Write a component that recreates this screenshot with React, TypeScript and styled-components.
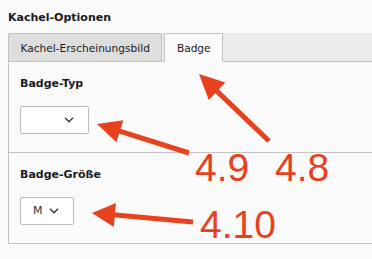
import React from "react";
import styled, { createGlobalStyle } from "styled-components";

const Global = createGlobalStyle`
  html, body { margin: 0; padding: 0; background: #fafafa; }
  body {
    font-family: "DejaVu Sans", Verdana, sans-serif;
    font-size: 11px;
    color: #1a1a1a;
    overflow: hidden;
  }
`;

const Page = styled.div`
  position: relative;
  width: 372px;
  height: 259px;
  padding: 10px 0 0 8px;
  box-sizing: border-box;
  overflow: hidden;
`;

const Title = styled.h2`
  margin: 0 0 7px;
  font-size: 11px;
  font-weight: bold;
  line-height: 16px;
`;

const TabBar = styled.div`
  display: flex;
  align-items: flex-start;
  gap: 2px;
  height: 28px;
  background: #ebebeb;
  border-bottom: 1px solid #c3c3c3;
`;

const Tab = styled.div<{ $active?: boolean }>`
  box-sizing: border-box;
  height: 29px;
  margin-bottom: -1px;
  padding: 0 11.5px;
  display: flex;
  align-items: center;
  font-size: 10.6px;
  line-height: 16px;
  border: 1px solid #c3c3c3;
  border-bottom-color: ${(p) => (p.$active ? "#fafafa" : "#c3c3c3")};
  background: ${(p) => (p.$active ? "#fafafa" : "#dedede")};
  color: #1a1a1a;
  border-radius: 2px 2px 0 0;
`;

const Panel = styled.div`
  border-left: 1px solid #c3c3c3;
  border-bottom: 1px solid #c3c3c3;
`;

const Section = styled.div<{ $last?: boolean }>`
  padding: 14px 12px 18px 11px;
  border-bottom: ${(p) => (p.$last ? "none" : "1px solid #c3c3c3")};
`;

const Label = styled.div`
  font-weight: bold;
  line-height: 16px;
  margin-bottom: 14px;
`;

const Select = styled.div<{ $width: number }>`
  box-sizing: border-box;
  width: ${(p) => p.$width}px;
  height: 28px;
  display: flex;
  align-items: center;
  justify-content: space-between;
  padding: 0 14px 0 12px;
  background: #ffffff;
  border: 1px solid #bbbbbb;
  border-radius: 2px;
  font-size: 11px;
  color: #333;
`;

const Value = styled.span`
  line-height: 16px;
`;

const Overlay = styled.svg`
  position: absolute;
  left: 0;
  top: 0;
  pointer-events: none;
`;

const Note = styled.span<{ $x: number; $y: number }>`
  position: absolute;
  left: ${(p) => p.$x}px;
  top: ${(p) => p.$y}px;
  font-family: "Liberation Sans", Arial, sans-serif;
  font-size: 39px;
  line-height: 39px;
  color: #e8411e;
  pointer-events: none;
`;

const Chevron = () => (
  <svg width="10" height="6" viewBox="0 0 10 6">
    <path d="M1 0.8 L5 4.8 L9 0.8" fill="none" stroke="#333" strokeWidth="1.3" />
  </svg>
);

const RED = "#e8411e";

function Arrow({ tip, tail, len, half }: { tip: [number, number]; tail: [number, number]; len: number; half: number }) {
  const dx = tail[0] - tip[0];
  const dy = tail[1] - tip[1];
  const d = Math.hypot(dx, dy);
  const ux = dx / d;
  const uy = dy / d;
  const bx = tip[0] + ux * len;
  const by = tip[1] + uy * len;
  const px = -uy * half;
  const py = ux * half;
  return (
    <g>
      <line x1={bx - ux * 2} y1={by - uy * 2} x2={tail[0]} y2={tail[1]} stroke={RED} strokeWidth={5} />
      <polygon points={`${tip[0]},${tip[1]} ${bx + px},${by + py} ${bx - px},${by - py}`} fill={RED} />
    </g>
  );
}

export default function App() {
  return (
    <>
      <Global />
      <Page>
        <Title>Kachel-Optionen</Title>
        <TabBar>
          <Tab>Kachel-Erscheinungsbild</Tab>
          <Tab $active>Badge</Tab>
        </TabBar>
        <Panel>
          <Section>
            <Label>Badge-Typ</Label>
            <Select $width={69}>
              <Value></Value>
              <Chevron />
            </Select>
          </Section>
          <Section $last>
            <Label>Badge-Größe</Label>
            <Select $width={54}>
              <Value>M</Value>
              <Chevron />
            </Select>
          </Section>
        </Panel>
        <Overlay width={372} height={259} viewBox="0 0 372 259">
          <Arrow tip={[199, 74]} tail={[269, 141]} len={25} half={12} />
          <Arrow tip={[97, 124]} tail={[189, 153]} len={24} half={11.5} />
          <Arrow tip={[92, 213]} tail={[193, 222]} len={23} half={12} />
        </Overlay>
        <Note $x={195} $y={148}>4.9</Note>
        <Note $x={275} $y={148}>4.8</Note>
        <Note $x={200} $y={205}>4.10</Note>
      </Page>
    </>
  );
}
